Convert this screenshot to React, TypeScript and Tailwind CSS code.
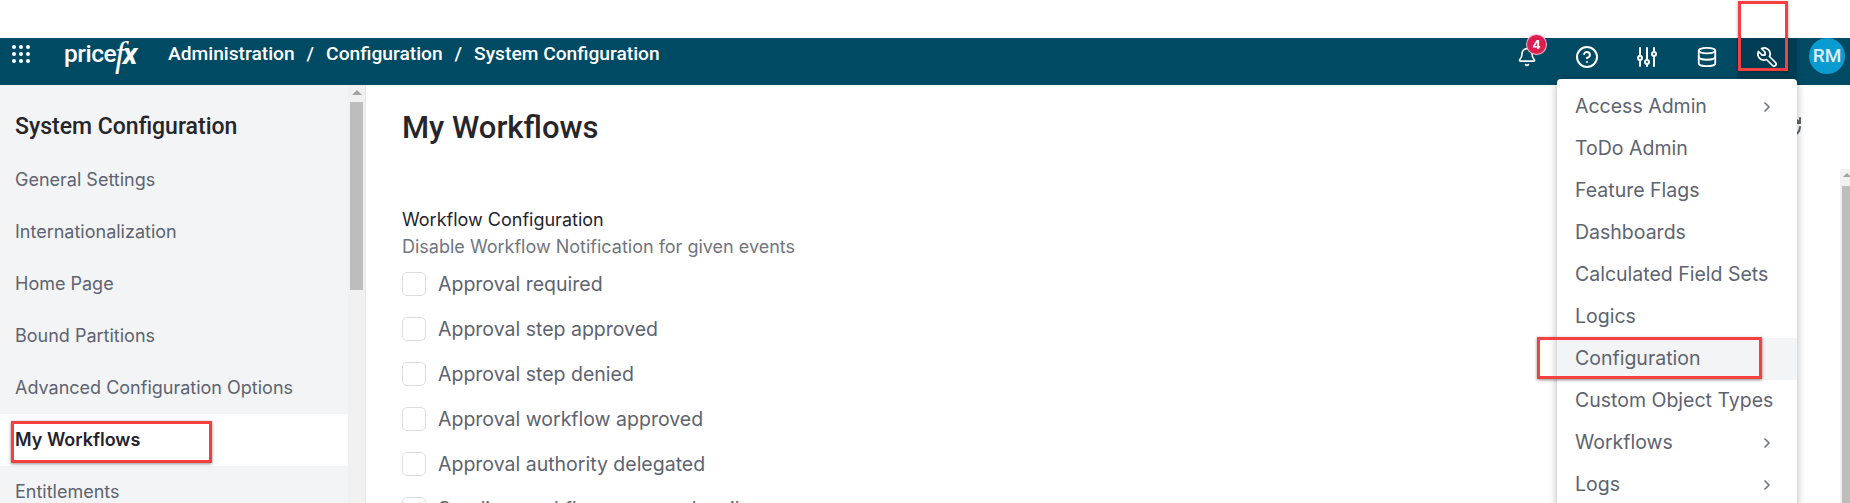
import React from 'react';
import { Bell, ChevronRight, CircleHelp, Database, RefreshCw } from 'lucide-react';

const sideItems = [
  'General Settings',
  'Internationalization',
  'Home Page',
  'Bound Partitions',
  'Advanced Configuration Options',
  'My Workflows',
  'Entitlements',
];

const checks = [
  'Approval required',
  'Approval step approved',
  'Approval step denied',
  'Approval workflow approved',
  'Approval authority delegated',
  'Sending workflow approved mail',
];

const menuItems = [
  { label: 'Access Admin', more: true },
  { label: 'ToDo Admin' },
  { label: 'Feature Flags' },
  { label: 'Dashboards' },
  { label: 'Calculated Field Sets' },
  { label: 'Logics' },
  { label: 'Configuration', active: true },
  { label: 'Custom Object Types' },
  { label: 'Workflows', more: true },
  { label: 'Logs', more: true },
];

const SlidersIcon = () => (
  <svg width="24" height="24" viewBox="0 0 24 24" fill="none" stroke="currentColor" strokeWidth="2" strokeLinecap="round">
    <path d="M5 3v8M5 15v6M12 3v12M12 19v2M19 3v4M19 11v10" />
    <circle cx="5" cy="13" r="2" />
    <circle cx="12" cy="17" r="2" />
    <circle cx="19" cy="9" r="2" />
  </svg>
);

const WrenchIcon = () => (
  <svg width="24" height="24" viewBox="0 0 24 24" fill="none" stroke="currentColor" strokeWidth="1.75" strokeLinecap="round" strokeLinejoin="round">
    <path d="M7 10h3v-3l-3.5 -3.5a6 6 0 0 1 8 8l6 6a2 2 0 0 1 -3 3l-6 -6a6 6 0 0 1 -8 -8l3.5 3.5" />
  </svg>
);

const App: React.FC = () => {
  return (
    <div className="h-[503px] w-[1850px] overflow-hidden bg-white relative font-['Inter',sans-serif]">
      <div className="h-[38px]" />

      <header className="h-[47px] bg-[#004a64] flex text-white">
        <div className="flex items-center pb-[15px]">
          <div className="ml-[12px] grid grid-cols-3 gap-[3px]">
            {Array.from({ length: 9 }).map((_, i) => (
              <span key={i} className="w-[4px] h-[4px] rounded-full bg-white" />
            ))}
          </div>
          <div className="ml-[34px] w-[75px] flex items-center font-['Roboto',sans-serif]">
            <span className="text-[24.5px] font-medium tracking-[-0.5px] leading-none">price</span>
            <span className="text-[35px] italic font-medium leading-none font-['Liberation_Serif',serif] -ml-[1px]">f</span>
            <span className="text-[30px] italic font-bold leading-none -ml-[2px]">x</span>
          </div>
          <nav className="ml-[29px] flex items-center gap-[12px] text-[19.2px] font-medium font-['Roboto',sans-serif] leading-none">
            <span>Administration</span>
            <span>/</span>
            <span>Configuration</span>
            <span>/</span>
            <span>System Configuration</span>
          </nav>
        </div>

        <div className="ml-auto flex h-full">
          <div className="flex items-center pb-[9px]">
            <div className="relative w-[20px] h-[20px]">
              <Bell className="w-[20px] h-[20px]" strokeWidth={2} />
              <span className="absolute -top-[13px] left-[9px] w-[21px] h-[21px] rounded-full bg-[#dc1e50] border border-white/70 flex items-center justify-center text-[12px] font-bold leading-none">
                4
              </span>
            </div>
            <CircleHelp className="ml-[38px] w-[24px] h-[24px]" strokeWidth={2} />
            <div className="ml-[36px] w-[24px] h-[24px]">
              <SlidersIcon />
            </div>
            <Database className="ml-[37px] w-[22px] h-[22px]" strokeWidth={2} />
          </div>
          <div className="ml-[19px] w-[60px] h-full pb-[9px] bg-[#003d54] flex items-center justify-center">
            <WrenchIcon />
          </div>
          <div className="ml-[12px] mr-[5px] w-[36px] h-[36px] rounded-full bg-[#0a9bd0] flex items-center justify-center text-[19px] font-medium font-['Roboto',sans-serif] text-white/85">
            RM
          </div>
        </div>
      </header>

      <div className="flex h-[418px]">
        <aside className="w-[366px] shrink-0 flex border-r border-[#e6e7ea]">
          <div className="w-[348px] bg-[#f3f4f6]">
            <h2 className="pl-[15px] pt-[30px] text-[23px] leading-[24px] font-medium text-[#25252a] font-['Roboto',sans-serif]">
              System Configuration
            </h2>
            <ul className="mt-[15px]">
              {sideItems.map((item) => (
                <li
                  key={item}
                  className={
                    item === 'My Workflows'
                      ? 'h-[52px] pl-[15px] pb-[1px] flex items-center text-[18px] font-semibold text-[#1f2430] bg-white'
                      : 'h-[52px] pl-[15px] pb-[1px] flex items-center text-[18px] text-[#5d6370]'
                  }
                >
                  {item}
                </li>
              ))}
            </ul>
          </div>
          <div className="w-[17px] bg-[#f1f1f1] flex flex-col items-center">
            <div className="mt-[5px] w-0 h-0 border-x-[5px] border-x-transparent border-b-[5px] border-b-[#a3a3a3]" />
            <div className="mt-[7px] w-[13px] h-[188px] bg-[#bdbdbd]" />
          </div>
        </aside>

        <main className="flex-1 pl-[36px]">
          <h1 className="mt-[26px] text-[31px] leading-[34px] font-medium text-[#25252a] font-['Roboto',sans-serif]">
            My Workflows
          </h1>
          <h3 className="mt-[64px] text-[18px] leading-[22px] text-[#1f2430]">Workflow Configuration</h3>
          <p className="mt-[4px] text-[18px] leading-[24px] text-[#70757f]">Disable Workflow Notification for given events</p>
          <div className="mt-[13px] flex flex-col gap-[21px]">
            {checks.map((label) => (
              <label key={label} className="flex items-center gap-[12px] h-[24px] text-[19.5px] text-[#5d6370]">
                <span className="w-[24px] h-[24px] rounded-[5px] border border-[#dcdde3] bg-white shrink-0" />
                <span className="pt-[2px]">{label}</span>
              </label>
            ))}
          </div>
        </main>
      </div>

      {/* refresh icon peeking out behind the menu */}
      <RefreshCw className="absolute left-[1779px] top-[115px] w-[24px] h-[24px] text-[#5d6370]" strokeWidth={2} />

      {/* admin dropdown */}
      <div className="absolute left-[1557px] top-[79px] w-[240px] h-[440px] bg-white rounded-[4px] shadow-[0_2px_8px_rgba(0,0,0,0.3)] z-10 pt-[7px]">
        {menuItems.map((m) => (
          <div
            key={m.label}
            className={
              m.active
                ? 'h-[42px] pl-[18px] pr-[22px] flex items-center justify-between text-[19.5px] text-[#5d6370] bg-[#f3f4f6]'
                : 'h-[42px] pl-[18px] pr-[22px] flex items-center justify-between text-[19.5px] text-[#5d6370]'
            }
          >
            <span>{m.label}</span>
            {m.more && <ChevronRight className="w-[16px] h-[16px] text-[#6b7280]" strokeWidth={2.5} />}
          </div>
        ))}
      </div>

      {/* right page scrollbar */}
      <div className="absolute right-0 top-[169px] w-[10px] h-[334px] bg-[#f1f1f1] pl-[2px]">
        <div className="mt-[4px] ml-[1px] w-0 h-0 border-x-[4px] border-x-transparent border-b-[4px] border-b-[#a3a3a3]" />
        <div className="mt-[9px] h-[320px] bg-[#bdbdbd]" />
      </div>

      {/* red annotation boxes */}
      <div className="absolute left-[1738px] top-[1px] w-[50px] h-[70px] border-[3px] border-[#f44040] z-20 shadow-[0_1px_3px_rgba(0,0,0,0.35)]" />
      <div className="absolute left-[1537px] top-[337px] w-[225px] h-[42px] border-[3px] border-[#f44040] z-20 shadow-[0_1px_3px_rgba(0,0,0,0.45)]" />
      <div className="absolute left-[11px] top-[421px] w-[201px] h-[42px] border-[3px] border-[#f44040] z-20 shadow-[0_1px_3px_rgba(0,0,0,0.45)]" />
    </div>
  );
};

export default App;
